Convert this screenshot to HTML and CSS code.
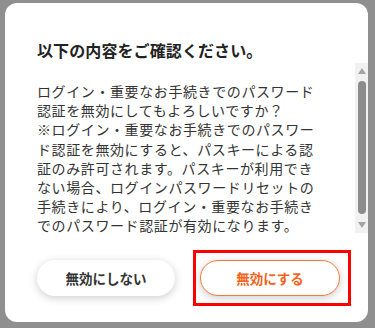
FILE: index.html
```html
<!DOCTYPE html>
<html lang="ja">
<head>
<meta charset="utf-8">
<link rel="stylesheet" href="styles.css">
</head>
<body>
<div class="backdrop">
  <div class="modal">
    <h2 class="title">以下の内容をご確認ください。</h2>
    <div class="scroll">
      <div class="scroll-body">
        <p class="text">ログイン・重要なお手続きでのパスワード認証を無効にしてもよろしいですか？<br>※ログイン・重要なお手続きでのパスワー<br>ド認証を無効にすると、パスキーによる認証のみ許可されます。パスキーが利用できない場合、ログインパスワードリセットの手続きにより、ログイン・重要なお手続きでのパスワード認証が有効になります。</p>
      </div>
      <div class="scrollbar">
        <span class="arrow up"></span>
        <span class="thumb"></span>
        <span class="arrow down"></span>
      </div>
    </div>
    <div class="actions">
      <button class="btn btn-cancel">無効にしない</button>
      <button class="btn btn-confirm">無効にする</button>
    </div>
  </div>
</div>
</body>
</html>
```
FILE: styles.css
```css
html, body {
  margin: 0;
  padding: 0;
}
body {
  width: 375px;
  height: 328px;
  background: #8f8f8f;
  font-family: "Noto Sans CJK JP", "Noto Sans", sans-serif;
  overflow: hidden;
}
.backdrop {
  padding: 3px 7px 0 5px;
}
.modal {
  width: 363px;
  height: 319px;
  background: #fff;
  border-radius: 12px;
  box-sizing: border-box;
  padding-top: 35px;
  display: flex;
  flex-direction: column;
}
.title {
  margin: 0 0 0 32px;
  font-size: 16px;
  line-height: 24px;
  font-weight: 700;
  color: #222;
  letter-spacing: 0.1px;
}
.scroll {
  margin-top: 1px;
  height: 174px;
  display: flex;
  padding-left: 32px;
}
.scroll-body {
  width: 281px;
  overflow: hidden;
}
.text {
  margin: 0;
  padding-top: 19px;
  font-size: 14px;
  line-height: 19.2px;
  letter-spacing: 0.6px;
  color: #333;
}
.scrollbar {
  margin-left: auto;
  width: 13px;
  height: 170px;
  background: #f1f1f1;
  display: flex;
  flex-direction: column;
  align-items: center;
  padding: 5px 0;
  box-sizing: border-box;
}
.arrow {
  width: 0;
  height: 0;
  border-left: 4.5px solid transparent;
  border-right: 4.5px solid transparent;
}
.arrow.up {
  border-bottom: 6px solid #a3a3a3;
}
.arrow.down {
  border-top: 6px solid #a3a3a3;
}
.thumb {
  width: 8px;
  height: 133px;
  margin: 7px 0 8px;
  background: #8c8c8c;
  border-radius: 4px;
}
.actions {
  display: flex;
  padding-left: 32px;
  margin-top: 23px;
  gap: 25px;
}
.btn {
  height: 36px;
  border-radius: 18px;
  font-family: inherit;
  font-size: 13.5px;
  font-weight: 700;
  background: #fff;
  box-shadow: 0 2px 8px rgba(0, 0, 0, 0.2);
  cursor: pointer;
  padding: 0;
}
.btn-cancel {
  width: 138px;
  border: none;
  color: #333;
}
.btn-confirm {
  position: relative;
  width: 140px;
  border: 1.5px solid #f47a36;
  color: #f26219;
}
.btn-confirm::after {
  content: "";
  position: absolute;
  left: -8.5px;
  right: -11.5px;
  top: -11.5px;
  bottom: -10.5px;
  border: 3px solid #ff0000;
}
```
